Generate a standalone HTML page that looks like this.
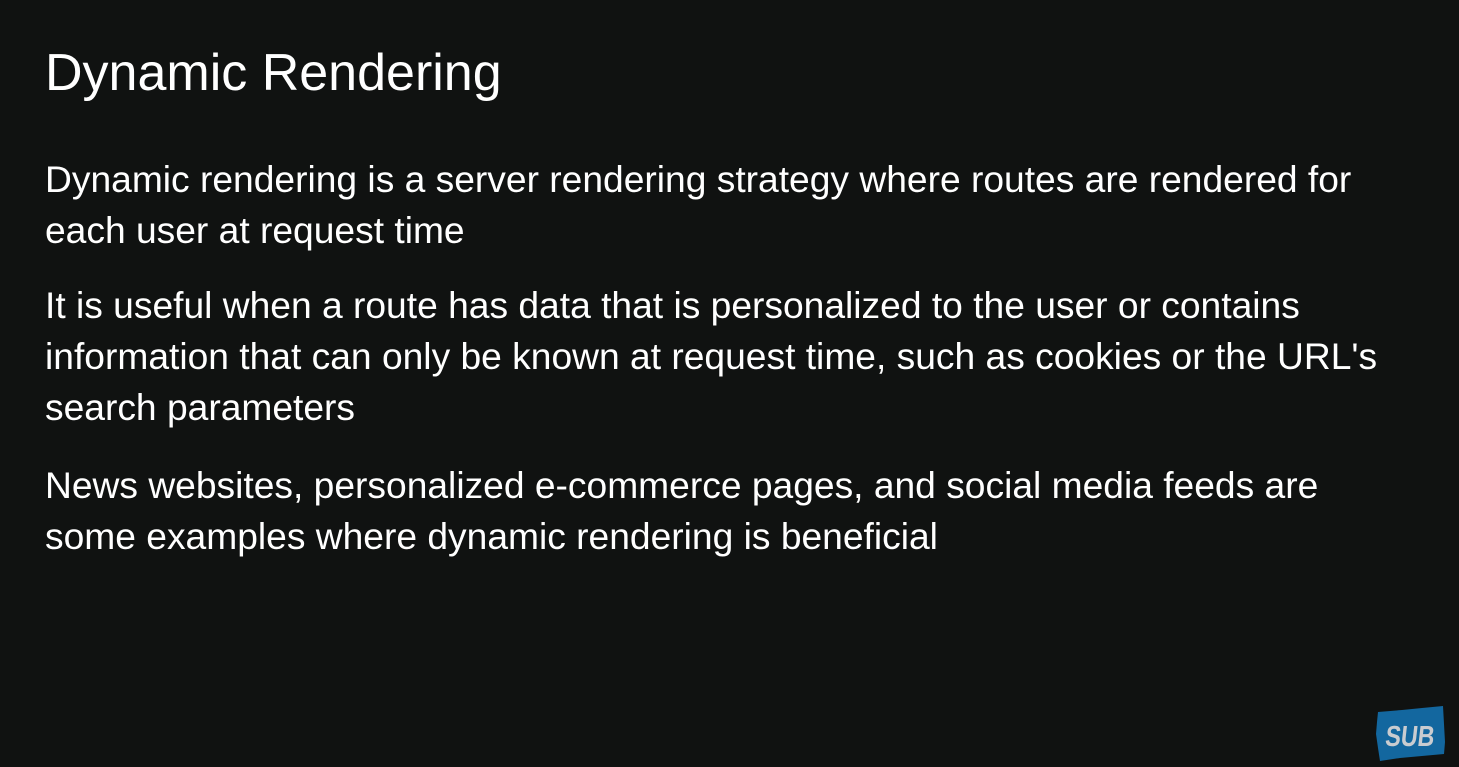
<!DOCTYPE html>
<html><head><meta charset="utf-8"><style>
html,body{margin:0;padding:0;background:#101211;width:1459px;height:767px;overflow:hidden}
body{font-family:"Liberation Sans",sans-serif;color:#fff;position:relative}
h1{position:absolute;left:45px;top:42px;margin:0;font-weight:400;font-size:52px;line-height:62px}
.p{position:absolute;left:45px;margin:0;font-size:37.2px;line-height:51px;width:1410px}
</style></head><body>
<h1>Dynamic Rendering</h1>
<p class="p" style="top:154px">Dynamic rendering is a server rendering strategy where routes are rendered for<br>each user at request time</p>
<p class="p" style="top:280px">It is useful when a route has data that is personalized to the user or contains<br>information that can only be known at request time, such as cookies or the URL's<br>search parameters</p>
<p class="p" style="top:460px">News websites, personalized e-commerce pages, and social media feeds are<br>some examples where dynamic rendering is beneficial</p>
<svg style="position:absolute;left:1372px;top:704px" width="76" height="58" viewBox="0 0 76 58">
<path d="M6 8 L30 6 L50 4 L71 2 L72 20 L73 38 L72 50 L50 52 L28 54 L8 57 L6 44 L4 30 L5 18 Z" fill="#13679f"/>
<g transform="translate(37,42) scale(0.8,1) skewX(-8)">
<text x="0" y="0" text-anchor="middle" font-family="Liberation Sans,sans-serif" font-weight="700" font-size="29" fill="#c9ccd0">SUB</text>
</g>
</svg>
</body></html>
